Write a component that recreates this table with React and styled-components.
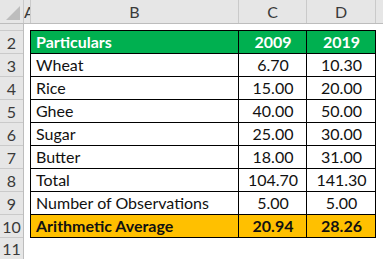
import React from 'react'
import styled, { createGlobalStyle } from 'styled-components'

const GlobalStyle = createGlobalStyle`
  html, body {
    margin: 0;
    padding: 0;
    background: #ffffff;
  }
  * { box-sizing: border-box; }
`

const rows = [
  { n: 3, label: 'Wheat', a: '6.70', b: '10.30' },
  { n: 4, label: 'Rice', a: '15.00', b: '20.00' },
  { n: 5, label: 'Ghee', a: '40.00', b: '50.00' },
  { n: 6, label: 'Sugar', a: '25.00', b: '30.00' },
  { n: 7, label: 'Butter', a: '18.00', b: '31.00' },
  { n: 8, label: 'Total', a: '104.70', b: '141.30' },
  { n: 9, label: 'Number of Observations', a: '5.00', b: '5.00' },
]

const columns = [
  { name: 'A', width: 7, clip: true },
  { name: 'B', width: 208 },
  { name: 'C', width: 68 },
  { name: 'D', width: 69 },
]

const App = () => {
  return (
    <>
      <GlobalStyle />
      <Sheet>
        <HeaderBar>
          <Corner>
            <svg width="23" height="23" viewBox="0 0 23 23">
              <polygon points="20,6 20,20 6,20" fill="#bdbdbd" />
            </svg>
          </Corner>
          {columns.map((c) => (
            <ColHead key={c.name} $width={c.width} $clip={c.clip}>
              {c.name}
            </ColHead>
          ))}
          <ColHead $grow />
        </HeaderBar>

        <Body>
          <RowHeads>
            <RowHead $height={7} />
            {[2, 3, 4, 5, 6, 7, 8, 9, 10].map((n) => (
              <RowHead key={n} $height={23}>{n}</RowHead>
            ))}
            <RowHead $grow>11</RowHead>
          </RowHeads>

          <Cells>
            <Table>
              <Cell $fill="#00b050" $bold $color="#ffffff">Particulars</Cell>
              <Cell $fill="#00b050" $bold $color="#ffffff" $center>2009</Cell>
              <Cell $fill="#00b050" $bold $color="#ffffff" $center>2019</Cell>

              {rows.map((r) => (
                <React.Fragment key={r.n}>
                  <Cell>{r.label}</Cell>
                  <Cell $center>{r.a}</Cell>
                  <Cell $center>{r.b}</Cell>
                </React.Fragment>
              ))}

              <Cell $fill="#ffc000" $bold>Arithmetic Average</Cell>
              <Cell $fill="#ffc000" $bold $center>20.94</Cell>
              <Cell $fill="#ffc000" $bold $center>28.26</Cell>
            </Table>
          </Cells>
        </Body>
      </Sheet>
    </>
  )
}

export default App

const Sheet = styled.div`
  width: 383px;
  height: 259px;
  overflow: hidden;
  display: flex;
  flex-direction: column;
  font-family: Lato, "Liberation Sans", sans-serif;
  background: #ffffff;
`

const HeaderBar = styled.div`
  display: flex;
  height: 24px;
  flex-shrink: 0;
  background: #e6e6e6;
  border-bottom: 1px solid #bdbdbd;
`

const Corner = styled.div`
  width: 24px;
  border-right: 1px solid #cacaca;
  display: flex;
`

const ColHead = styled.div`
  width: ${(p) => (p.$width ? `${p.$width}px` : 'auto')};
  flex: ${(p) => (p.$grow ? 1 : 'none')};
  border-right: ${(p) => (p.$grow ? 'none' : '1px solid #cacaca')};
  display: flex;
  align-items: center;
  justify-content: ${(p) => (p.$clip ? 'flex-start' : 'center')};
  overflow: hidden;
  font-size: 16px;
  color: #3a3a3a;
  white-space: nowrap;
`

const Body = styled.div`
  flex: 1;
  display: flex;
`

const RowHeads = styled.div`
  width: 24px;
  display: flex;
  flex-direction: column;
  background: #e6e6e6;
  border-right: 1px solid #bdbdbd;
`

const RowHead = styled.div`
  height: ${(p) => (p.$height ? `${p.$height}px` : 'auto')};
  flex: ${(p) => (p.$grow ? 1 : 'none')};
  border-bottom: ${(p) => (p.$grow ? 'none' : '1px solid #cacaca')};
  display: flex;
  align-items: center;
  justify-content: center;
  font-size: 16px;
  color: #3a3a3a;
  overflow: hidden;
`

const Cells = styled.div`
  flex: 1;
  padding: 6px 0 0 6px;
`

const Table = styled.div`
  display: grid;
  grid-template-columns: 208px 68px 69px;
  grid-auto-rows: 23px;
  width: 346px;
  border-left: 1px solid #000000;
  border-top: 1px solid #000000;
`

const Cell = styled.div`
  display: flex;
  align-items: flex-end;
  justify-content: ${(p) => (p.$center ? 'center' : 'flex-start')};
  padding: 0 4px 1px 5px;
  border-right: 1px solid #000000;
  border-bottom: 1px solid #000000;
  background: ${(p) => p.$fill || '#ffffff'};
  color: ${(p) => p.$color || '#111111'};
  font-weight: ${(p) => (p.$bold ? 700 : 400)};
  font-size: 16px;
  line-height: 20px;
  white-space: nowrap;
`
